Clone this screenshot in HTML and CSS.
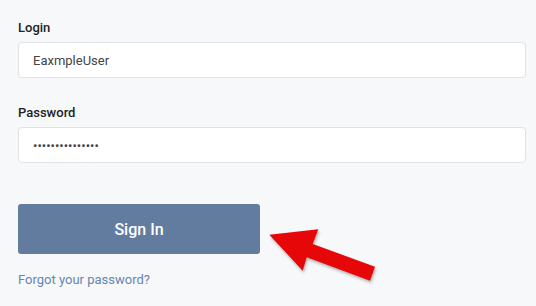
FILE: index.html
```html
<!doctype html>
<html lang="en">
<head>
    <meta charset="UTF-8">
    <meta name="viewport" content="width=device-width, initial-scale=1.0">
    <title>Login</title>
    <link rel="stylesheet" href="styles.css">
</head>
<body>
<div class="page">
    <form class="login-form">
        <div class="field">
            <label class="field-label" for="login">Login</label>
            <input class="field-input" id="login" type="text" value="EaxmpleUser">
        </div>
        <div class="field">
            <label class="field-label" for="password">Password</label>
            <input class="field-input" id="password" type="password" value="examplepassword">
        </div>
        <button class="btn-signin" type="button">Sign In</button>
        <a class="forgot" href="#">Forgot your password?</a>
    </form>
    <!-- annotation arrow pointing at the button -->
    <svg class="arrow" width="130" height="70" viewBox="260 220 130 70">
        <polygon points="269.3,234.7 318.3,229.3 312.7,244 375,266.7 370,280.7 306.7,257.3 302.7,270.7" fill="#e60808"/>
    </svg>
</div>
</body>
</html>
```

FILE: styles.css
```css
body{ margin: 0; background: #f7f8fa; font-family: Roboto, "Liberation Sans", sans-serif; }
.page{ position: relative; width: 536px; height: 306px; overflow: hidden; }
.login-form{ display: flex; flex-direction: column; align-items: flex-start; padding: 20px 10px 0 18px; }
.field{ display: flex; flex-direction: column; width: 508px; margin-bottom: 27px; }
.field:last-of-type{ margin-bottom: 41px; }
.field-label{ font-size: 13px; font-weight: 500; line-height: 16px; color: #222; margin-bottom: 6px; }
.field-input{ box-sizing: border-box; width: 508px; height: 36px; padding: 0 14px; border: 1px solid #e0e1e3; border-radius: 4px; background: #fff; font-family: Roboto, sans-serif; font-size: 13px; color: #444; outline: none; }
.btn-signin{ width: 242px; height: 50px; border: 0; border-radius: 3px; background: #627c9f; color: #fff; font-family: Roboto, sans-serif; font-size: 16px; font-weight: 500; padding: 0; margin-bottom: 18px; }
.forgot{ font-size: 13px; line-height: 16px; color: #6486b0; text-decoration: none; }
.arrow{ position: absolute; left: 260px; top: 220px; filter: drop-shadow(1px 2px 1.5px rgba(0,0,0,0.3)); }
```
